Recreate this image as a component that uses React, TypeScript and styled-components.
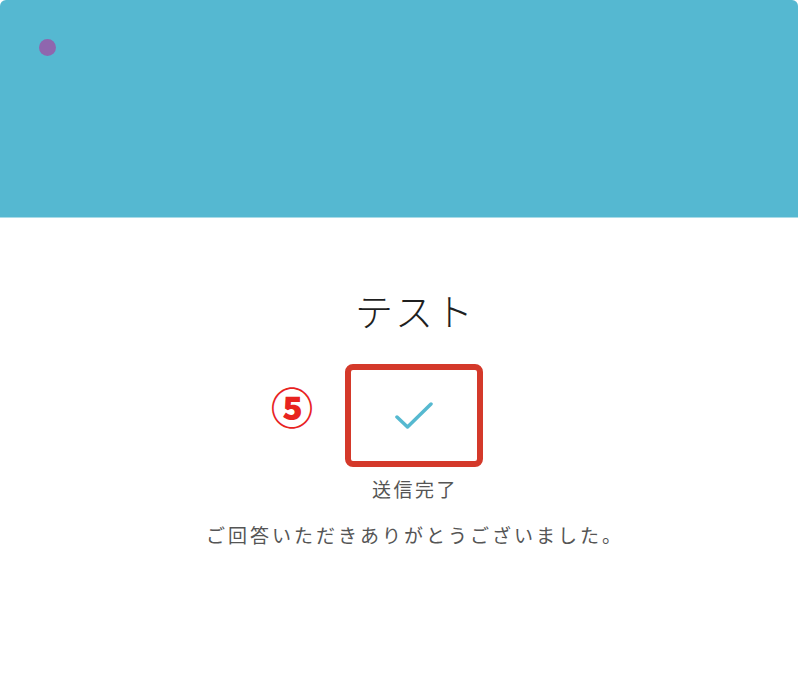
import React from 'react';
import styled, { createGlobalStyle } from 'styled-components';

const GlobalStyle = createGlobalStyle`
  html, body {
    margin: 0;
    padding: 0;
    background: #ffffff;
    font-family: "Noto Sans CJK JP", "Noto Sans", sans-serif;
  }
`;

const Page = styled.div`
  width: 798px;
  min-height: 688px;
  background: #ffffff;
`;

const Header = styled.header`
  height: 218px;
  background: #55b8d1;
  border-radius: 6px 6px 0 0;
  border-bottom: 1px solid #a9dbe8;
  padding: 39px 0 0 39px;
  box-sizing: border-box;
`;

const Dot = styled.span`
  display: block;
  width: 17px;
  height: 17px;
  border-radius: 50%;
  background: #8f66ae;
`;

const Body = styled.main`
  display: flex;
  flex-direction: column;
  align-items: center;
  padding-top: 64px;
  margin-left: 32px;
`;

const Title = styled.h1`
  margin: 0;
  font-size: 38px;
  font-weight: 300;
  letter-spacing: 2px;
  line-height: 56px;
  color: #1f1f1f;
`;

const CheckArea = styled.div`
  position: relative;
  width: 138px;
  height: 103px;
  margin-top: 26px;
  margin-right: 2px;
  display: flex;
  align-items: center;
  justify-content: center;
`;

const Highlight = styled.div`
  position: absolute;
  inset: 0;
  border: 6px solid #d4392a;
  border-radius: 8px;
`;

const Marker = styled.span`
  position: absolute;
  left: -74px;
  top: 19px;
  font-family: "Noto Sans CJK JP", sans-serif;
  font-size: 42px;
  font-weight: 900;
  line-height: 46px;
  color: #e8231f;
`;

const Status = styled.p`
  margin: 8px 0 0;
  font-size: 19px;
  line-height: 28px;
  letter-spacing: 2.5px;
  color: #555555;
`;

const Message = styled.p`
  margin: 18px 0 0;
  font-size: 19px;
  line-height: 28px;
  letter-spacing: 3px;
  color: #555555;
`;

export default function App() {
  return (
    <Page>
      <GlobalStyle />
      <Header>
        <Dot />
      </Header>
      <Body>
        <Title>テスト</Title>
        <CheckArea>
          <svg width="40" height="28" viewBox="0 0 40 28" fill="none">
            <path d="M3 15 L13.5 25 L37 2" stroke="#56b9d0" strokeWidth="3.5" strokeLinecap="round" strokeLinejoin="round" />
          </svg>
          <Highlight />
          <Marker>⑤</Marker>
        </CheckArea>
        <Status>送信完了</Status>
        <Message>ご回答いただきありがとうございました。</Message>
      </Body>
    </Page>
  );
}
